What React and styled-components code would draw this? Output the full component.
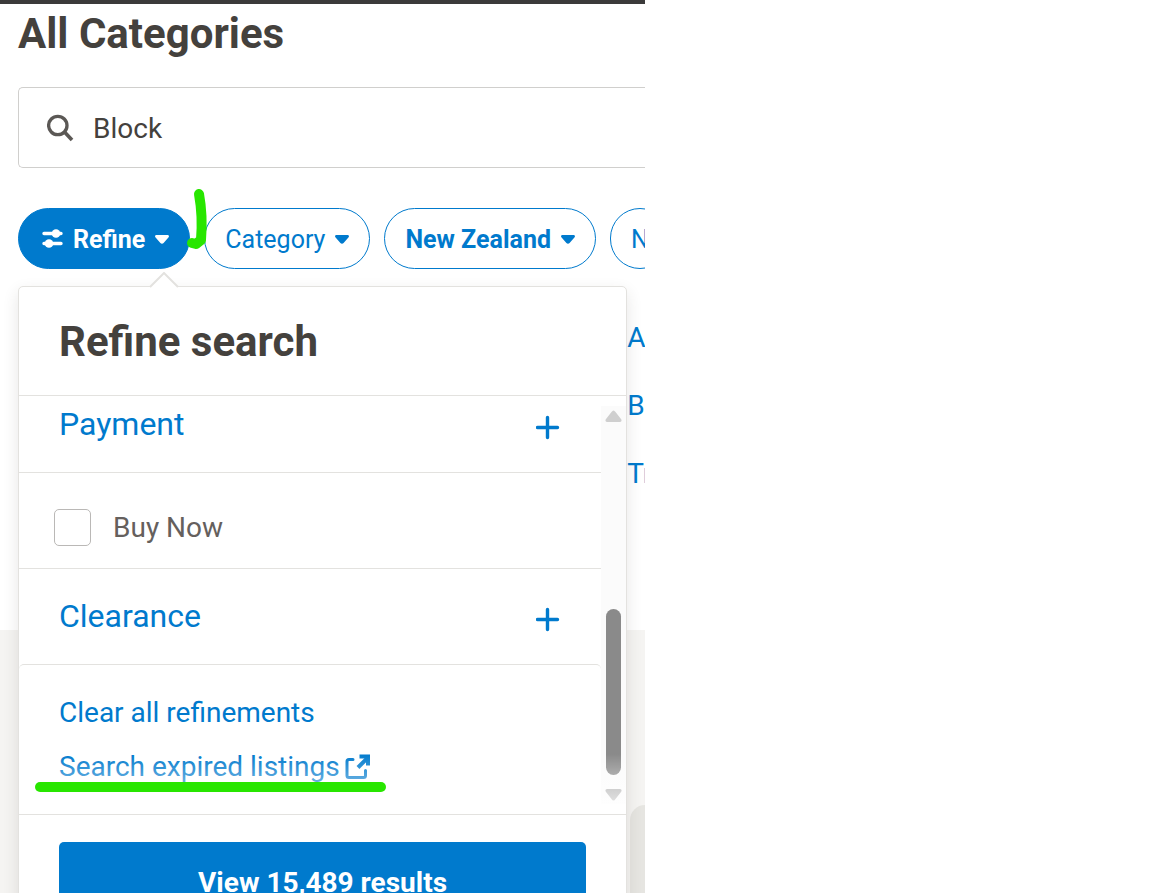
import React, { useState } from 'react';
import styled, { createGlobalStyle } from 'styled-components';

const theme = {
  blue: '#007acd',
  dark: '#44413d',
  text: '#65605d',
  line: '#e3e2df',
  marker: '#28e600',
};

const GlobalStyle = createGlobalStyle`
  * {
    box-sizing: border-box;
  }
  body {
    margin: 0;
    background: #fff;
    font-family: Roboto, "Liberation Sans", sans-serif;
    font-size: 28px;
    color: ${theme.dark};
  }
  button, input {
    font: inherit;
    color: inherit;
  }
  a {
    color: ${theme.blue};
    text-decoration: none;
  }
`;

const Page = styled.div`
  display: flex;
  flex-direction: column;
  width: 55%;
  height: 100vh;
  overflow: hidden;
  border-top: 4px solid #3b3a3a;
`;

const Content = styled.main`
  flex: none;
  padding: 6px 0 0 18px;
`;

const Title = styled.h1`
  margin: 0;
  font-size: 42px;
  line-height: 48px;
`;

const SearchBox = styled.label`
  display: flex;
  align-items: center;
  gap: 17px;
  height: 81px;
  margin-top: 29px;
  padding-left: 28px;
  border: 1px solid #d0cfcd;
  border-right: 0;
  border-radius: 5px 0 0 5px;

  input {
    flex: 1;
    min-width: 0;
    border: 0;
    outline: 0;
    padding: 2px 0 0;
    background: none;
  }
`;

const Filters = styled.div`
  position: relative;
  display: flex;
  gap: 14px;
  margin-top: 40px;
`;

const Chip = styled.button`
  flex: none;
  display: flex;
  align-items: center;
  gap: 10px;
  height: 61px;
  padding: ${props => props.$active ? '1px 20px 0 23px' : '1px 20px 0'};
  border: 1px solid ${theme.blue};
  border-radius: 31px;
  background: ${props => props.$active ? theme.blue : '#fff'};
  color: ${props => props.$active ? '#fff' : theme.blue};
  font-size: 25px;
  font-weight: ${props => props.$bold ? 700 : 400};
  white-space: nowrap;
`;

const Tick = styled.svg`
  position: absolute;
  left: 165px;
  top: -22px;
`;

const Panel = styled.section`
  position: absolute;
  top: 78px;
  left: 0;
  right: 18px;
  border: 1px solid ${theme.line};
  border-radius: 5px;
  background: #fff;
  box-shadow: 0 6px 16px rgba(60, 50, 40, 0.12);
`;

const Caret = styled.svg`
  position: absolute;
  left: 130px;
  top: -15px;
`;

const PanelHeader = styled.header`
  padding: 31px 40px 29px;
  border-bottom: 1px solid ${theme.line};

  h2 {
    margin: 0;
    font-size: 42px;
    line-height: 48px;
  }
`;

const PanelBody = styled.div`
  position: relative;
  display: flex;
  height: 418px;
  overflow: hidden;
`;

const Sections = styled.div`
  flex: 1;
  display: flex;
  flex-direction: column;
  justify-content: flex-end;
`;

const Section = styled.button`
  flex: none;
  display: flex;
  align-items: center;
  justify-content: space-between;
  height: ${props => props.$last ? '95px' : '96px'};
  padding: 0 41px 0 40px;
  border: 0;
  border-bottom: ${props => props.$last ? 0 : `1px solid ${theme.line}`};
  background: none;
  color: ${theme.blue};
  font-size: 32px;
  line-height: 37px;
`;

const CheckRow = styled.label`
  flex: none;
  display: flex;
  align-items: center;
  gap: 22px;
  height: 96px;
  padding: 14px 35px 0;
  border-bottom: 1px solid ${theme.line};
  color: ${theme.text};

  input {
    appearance: none;
    width: 37px;
    height: 37px;
    margin: 0;
    border: 1px solid #bab8b6;
    border-radius: 5px;
    background: #fff;
  }

  input:checked {
    background: ${theme.blue};
  }
`;

const Links = styled.div`
  flex: none;
  display: flex;
  flex-direction: column;
  align-items: flex-start;
  padding: 21px 40px 20px;
  border-top: 1px solid ${theme.line};
  border-radius: 5px 5px 0 0;
  line-height: 54px;
`;

const ExternalLink = styled.a`
  display: flex;
  align-items: center;
  gap: 5px;
`;

const Fade = styled.div`
  position: absolute;
  left: 0;
  right: 0;
  bottom: 0;
  height: 60px;
  background: linear-gradient(rgba(255, 255, 255, 0), rgba(255, 255, 255, 0.85));
  pointer-events: none;
`;

const Underline = styled.div`
  position: absolute;
  left: 16px;
  bottom: 22px;
  width: 351px;
  height: 10px;
  border-radius: 5px;
  background: ${theme.marker};
`;

const ScrollBar = styled.div`
  display: flex;
  flex-direction: column;
  align-items: center;
  width: 25px;
  margin: 10px 0;
  padding: 4px 1px 3px 0;
  background: #fbfbfb;
`;

const Thumb = styled.div`
  width: 15px;
  height: 166px;
  margin: auto 0 14px;
  border-radius: 8px;
  background: #8a8a8a;
`;

const PanelFooter = styled.footer`
  padding: 27px 40px;
  border-top: 1px solid ${theme.line};
`;

const ResultsButton = styled.button`
  width: 100%;
  height: 80px;
  border: 0;
  border-radius: 5px;
  background: ${theme.blue};
  color: #fff;
  font-weight: 700;
`;

const CategoryLinks = styled.nav`
  display: flex;
  flex-direction: column;
  align-items: flex-end;
  margin-top: 35px;
  line-height: 68px;

  a {
    width: 18px;
    overflow: hidden;
    white-space: nowrap;
  }
`;

const Bottom = styled.div`
  flex: 1;
  display: flex;
  justify-content: flex-end;
  margin-top: 122px;
  padding-top: 175px;
  background: #f5f4f2;
`;

const Card = styled.div`
  width: 15px;
  border-radius: 15px 0 0 0;
  background: #e6e5e1;
`;

const ArrowDown = () => (
  <svg width="14" height="9" viewBox="0 0 14 9" fill="currentColor" aria-hidden="true">
    <path d="M1.500 0h11c1.500 0 1.900 1.600 .9 2.600L8.600 8c-.9 1-2.300 1-3.200 0L.6 2.600C-.4 1.600 0 0 1.500 0z" />
  </svg>
);

const Plus = () => (
  <svg width="24" height="31" viewBox="0 0 24 31" fill="none" stroke="currentColor" strokeWidth="3.400" strokeLinecap="round" aria-hidden="true">
    <path d="M11.500 8.500v20M1.500 18.500h20" />
  </svg>
);

const Sliders = () => (
  <svg width="21" height="20" viewBox="0 0 21 20" fill="none" stroke="currentColor" strokeWidth="3.400" strokeLinecap="round" aria-hidden="true">
    <path d="M2 4.500h17M2 14.500h17" />
    <circle cx="14" cy="4.500" r="4.300" fill="currentColor" stroke="none" />
    <circle cx="7" cy="14.500" r="4.300" fill="currentColor" stroke="none" />
  </svg>
);

const SearchIcon = () => (
  <svg width="29" height="28" viewBox="0 0 29 28" fill="none" stroke="#5b5855" strokeWidth="3.300" aria-hidden="true">
    <circle cx="10.800" cy="11.500" r="9.200" />
    <path d="M17.500 18l7.500 8" strokeWidth="3.600" />
  </svg>
);

const ExternalIcon = () => (
  <svg width="25" height="26" viewBox="0 0 25 26" fill="none" stroke="currentColor" strokeWidth="3" aria-hidden="true">
    <path d="M8 5.500H4Q2 5.500 2 7.500V21.500Q2 23.500 4 23.500H18.500Q20.500 23.500 20.500 21.500V16.500" strokeLinecap="round" />
    <path d="M13 13.500L22 4.500" strokeWidth="4" />
    <path d="M14.500 2.500H23V11.500" strokeWidth="4" />
  </svg>
);

const ScrollArrow = ({ down }) => (
  <svg width="17" height="12" viewBox="0 0 17 12" aria-hidden="true">
    <path
      d={down ? 'M2 0h13q2.500 .5 1 3l-5.500 7q-2 3-4 0L1 3Q-.5 .5 2 0z' : 'M2 12h13q2.500-.5 1-3l-5.500-7q-2-3-4 0L1 9q-1.500 2.500 1 3z'}
      fill={down ? '#a0a0a0' : '#cfcfcf'}
    />
  </svg>
);

const App = () => {

  const [search, setSearch] = useState('Block');
  const [buyNow, setBuyNow] = useState(false);

  return (
    <>
      <GlobalStyle />
      <Page>
        <Content>
          <Title>All Categories</Title>
          <SearchBox>
            <SearchIcon />
            <input
              type="text"
              aria-label="Search"
              value={search}
              onChange={(e) => setSearch(e.target.value)}
            />
          </SearchBox>
          <Filters>
            <Chip $active $bold><Sliders />Refine<ArrowDown /></Chip>
            <Chip>Category<ArrowDown /></Chip>
            <Chip $bold>New Zealand<ArrowDown /></Chip>
            <Chip>N</Chip>
            <Panel>
              <Caret width="30" height="16" viewBox="0 0 30 16">
                <path d="M1 15L15 1L29 15V16H1z" fill="#fff" />
                <path d="M1 15L15 1L29 15" fill="none" stroke={theme.line} strokeWidth="2" />
              </Caret>
              <PanelHeader>
                <h2>Refine search</h2>
              </PanelHeader>
              <PanelBody>
                <Sections>
                  <Section>Payment<Plus /></Section>
                  <CheckRow>
                    <input
                      type="checkbox"
                      checked={buyNow}
                      onChange={() => setBuyNow(!buyNow)}
                    />
                    Buy Now
                  </CheckRow>
                  <Section $last>Clearance<Plus /></Section>
                  <Links>
                    <a href="#clear">Clear all refinements</a>
                    <ExternalLink href="#expired">Search expired listings<ExternalIcon /></ExternalLink>
                  </Links>
                </Sections>
                <ScrollBar>
                  <ScrollArrow />
                  <Thumb />
                  <ScrollArrow down />
                </ScrollBar>
                <Fade />
                <Underline />
              </PanelBody>
              <PanelFooter>
                <ResultsButton>View 15,489 results</ResultsButton>
              </PanelFooter>
            </Panel>
            <Tick width="30" height="68" viewBox="0 0 30 68" fill="none" stroke={theme.marker} strokeWidth="10" strokeLinecap="round" strokeLinejoin="round">
              <path d="M16 8Q20 30 18 54L13 58L9 57" />
            </Tick>
          </Filters>
          <CategoryLinks>
            <a href="#a">A</a>
            <a href="#b">B</a>
            <a href="#t">Tr</a>
          </CategoryLinks>
        </Content>
        <Bottom>
          <Card />
        </Bottom>
      </Page>
    </>
  );

}

export default App;
